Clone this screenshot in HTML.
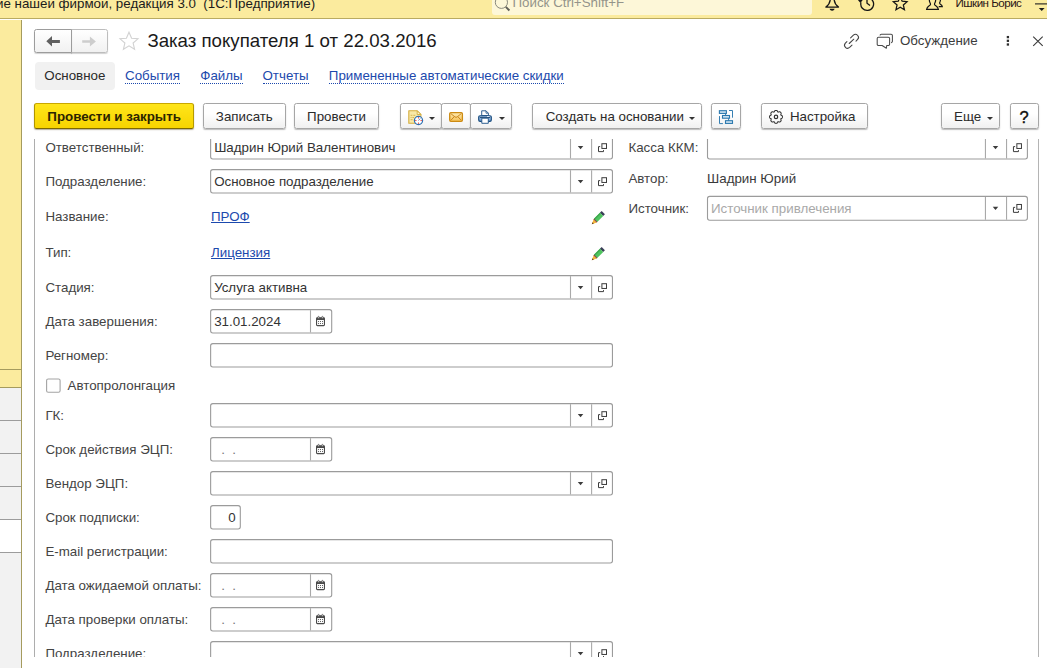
<!DOCTYPE html>
<html lang="ru">
<head>
<meta charset="utf-8">
<title>Заказ покупателя 1 от 22.03.2016</title>
<style>
*{box-sizing:border-box;margin:0;padding:0}
html,body{width:1047px;height:668px;overflow:hidden;background:#fff}
body{position:relative;font-family:"Liberation Sans",Arial,sans-serif;font-size:13.33px;color:#333;line-height:1}
.abs{position:absolute}
/* top bar */
#topbar{left:0;top:0;width:1047px;height:18.5px;background:#fbeb9e;border-bottom:1.5px solid #b9ab62;overflow:hidden}
#apptitle{right:731.9px;top:-5.2px;white-space:pre;font-size:13.33px;color:#1c1c1c;line-height:18px}
#search{left:492px;top:-4px;width:320px;height:18.7px;background:#fdf7d8;border-radius:3px}
#searchtxt{left:512.5px;top:-6.5px;font-size:13.33px;line-height:18px;color:#94948a;white-space:pre}
#user{left:955.5px;top:-5px;font-size:11.6px;letter-spacing:-0.52px;line-height:16px;color:#2a1515;white-space:pre}
/* left panel */
#leftpanel{left:0;top:20px;width:22px;height:648px;background:#f2f2f2;border-right:1.3px solid #a59b5e}
#leftpanel .y{left:0;top:0;width:21px;height:367px;background:#fbeb9e}
#leftpanel .ln{left:0;width:21px;height:1.4px;background:#9c9c9c}
/* header */
.navbtn{top:29px;height:24px;border:1px solid #a9a9a9;background:linear-gradient(#fff,#f1f1f1);box-shadow:0 1px 1px rgba(0,0,0,.18)}
#title{left:147.4px;top:30.3px;font-size:18.67px;line-height:22px;color:#1a1a1a;white-space:pre}
#tabsel{left:34.5px;top:62.3px;width:80.5px;height:27.3px;background:#f1f1f1;border-radius:4px}
.tab{top:67.9px;line-height:16px;height:16.1px;white-space:pre;font-size:13.33px}
a.tab{color:#1c49ad;border-bottom:1px dotted #1c49ad;text-decoration:none}
#obs{left:900px;top:32.7px;line-height:16px;white-space:pre;color:#3c3c3c}
/* toolbar */
.btn{top:103px;height:26px;padding-top:1.300px;border:1px solid #a6a6a6;border-radius:2.500px;background:linear-gradient(#ffffff 40%,#f0f0f0);box-shadow:0 1px 1.200px rgba(0,0,0,.27);line-height:23px;text-align:center;white-space:pre;color:#2b2b2b;font-size:13.33px}
#bmain{left:34px;width:160.3px;background:linear-gradient(#ffe51a,#f7d400);border-color:#c9a700 #b59a00 #7d6800 #b09500;box-shadow:0 1px 1.200px rgba(60,45,0,.4);font-weight:bold;color:#2b2400}
.caret{display:inline-block;width:0;height:0;border-left:3px solid transparent;border-right:3px solid transparent;border-top:3.2px solid #333;vertical-align:middle}
/* form */
#formclip{left:24px;top:139px;width:1023px;height:518px;overflow:hidden}
#form{left:0;top:-139px;width:1023px;height:700px}
#vl{left:10px;top:139px;width:1px;height:530px;background:#adadad}
#vr{left:1014px;top:139px;width:1px;height:530px;background:#b4b4b4}
.lbl{left:21.4px;line-height:16px;white-space:pre;color:#444;font-size:13.33px}
.ft{line-height:16px;white-space:pre;color:#333;font-size:13.33px}
.ft.ph{color:#a9a9a9}
.ft.dots{color:#777;margin-left:-.3px}
.lnk{color:#1c49ad;text-decoration:underline;line-height:16px;white-space:pre;font-size:13.33px}
.txt{line-height:16px;white-space:pre;color:#3a3a3a}

</style>
</head>
<body>
<!-- TOP BAR -->
<div id="topbar" class="abs">
  <div id="search" class="abs"></div>
  <div id="apptitle" class="abs">Управление нашей фирмой, редакция 3.0  (1С:Предприятие)</div>
  <svg class="abs" style="left:492px;top:-6px" width="22" height="22" viewBox="0 0 22 22"><circle cx="9.4" cy="8.3" r="6.1" fill="none" stroke="#7d7d72" stroke-width="0.9"/><path d="M13.8 12.9l3.6 3.6" stroke="#5f5f57" stroke-width="1.9"/></svg>
  <div id="searchtxt" class="abs">Поиск Ctrl+Shift+F</div>
  <!-- bell -->
  <svg class="abs" style="left:822px;top:-8px" width="20" height="20" viewBox="0 0 20 20"><path d="M8.300 7c-.2 3.800-1.400 6-4.400 8.100h12.600c-3-2.100-4.200-4.300-4.400-8.100" fill="none" stroke="#151515" stroke-width="1.300" stroke-linejoin="round"/><path d="M7.600 16.700h5l-.6 1.400q-1.900 1.400-3.800 0z" fill="#151515"/></svg>
  <!-- history -->
  <svg class="abs" style="left:856px;top:-8px" width="22" height="20" viewBox="0 0 22 20"><path d="M5 9.200a6.400 6.400 0 1 0 1.400-2.600" fill="none" stroke="#151515" stroke-width="1.300" transform="translate(0,1.2)"/><path d="M1.600 7.600h5.400l-2.600 3.400z" fill="#151515"/><path d="M11 5v6.300l3 2.300" fill="none" stroke="#151515" stroke-width="1.300"/></svg>
  <!-- star -->
  <svg class="abs" style="left:890px;top:-8px" width="20" height="20" viewBox="0 0 20 20"><path d="M10.20 4.70L12.14 9.23L17.05 9.68L13.34 12.92L14.43 17.72L10.20 15.20L5.97 17.72L7.06 12.92L3.35 9.68L8.26 9.23Z" fill="none" stroke="#151515" stroke-width="1.250" stroke-linejoin="miter"/></svg>
  <!-- people -->
  <svg class="abs" style="left:924px;top:-8px" width="22" height="20" viewBox="0 0 22 20"><path d="M2.600 17.300c.3-2.300 1.800-3 3.500-4.200.8-.6.300-1.700-.2-2.600-1.400-2.600.3-5 2.600-5s4 2.400 2.600 5c-.5.900-1 2-.2 2.600 1.700 1.200 3.200 1.900 3.500 4.200z" fill="none" stroke="#151515" stroke-width="1.200"/><path d="M12.600 6.300c2.300-1.600 4.700.6 3.500 3.300-.5 1-.8 1.800 0 2.400 1 .7 2 1.200 2.200 2.700h-3.600" fill="none" stroke="#151515" stroke-width="1.200"/></svg>
  <div id="user" class="abs">Ишкин Борис</div>
  <svg class="abs" style="left:1033px;top:0" width="14" height="14" viewBox="0 0 14 14"><path d="M2 3.900h12" stroke="#1d1d1d" stroke-width="1.100"/><path d="M5.800 8.100h5.800l-2.900 2.800z" fill="#1d1d1d"/></svg>
</div>

<!-- LEFT PANEL -->
<div id="leftpanel" class="abs">
  <div class="y abs"></div>
  <div class="ln abs" style="top:348.6px;background:#a59b5e"></div>
  <div class="ln abs" style="top:366.6px;background:#a59b5e"></div>
  <div class="ln abs" style="top:399.6px"></div>
  <div class="ln abs" style="top:432.6px"></div>
  <div class="ln abs" style="top:465.8px"></div>
  <div class="abs" style="left:0;top:500px;width:21px;height:32px;background:#fff"></div>
  <div class="ln abs" style="top:499px"></div>
  <div class="ln abs" style="top:531.5px"></div>
</div>

<!-- HEADER -->
<div class="navbtn abs" style="left:34px;width:38px;border-radius:2.500px 0 0 2.500px;border-color:#9c9c9c;z-index:1"></div>
<div class="navbtn abs" style="left:71px;width:37px;border-radius:0 2.500px 2.500px 0;border-color:#bdbdbd"></div>
<svg class="abs" style="left:44px;top:34px;z-index:2" width="20" height="14" viewBox="0 0 20 14"><path d="M2.300 7.200L8 1.900V5.900H15.900V8.900H8V12.500Z" fill="#606060"/></svg>
<svg class="abs" style="left:80px;top:34px" width="20" height="14" viewBox="0 0 20 14"><path d="M15.900 7.500L9.900 2.600V6.300H2.200V8.700H9.900V12.500Z" fill="#cdcdcd"/></svg>
<svg class="abs" style="left:118px;top:30.200px" width="22" height="22" viewBox="0 0 22 22"><path d="M11 2.200l2.600 6 6.400.6-4.900 4.200 1.500 6.300-5.600-3.400-5.600 3.400 1.500-6.300-4.900-4.200 6.400-.6z" fill="none" stroke="#d2d2d2" stroke-width="1.1"/></svg>
<div id="title" class="abs">Заказ покупателя 1 от 22.03.2016</div>

<svg class="abs" style="left:842px;top:32px" width="20" height="19" viewBox="0 0 20 19"><g fill="none" stroke="#444" stroke-width="1.050" stroke-linecap="round"><path d="M8.600 5.900L11.380 3.180A3 3 0 0 1 15.620 7.420L14 9.100"/><path d="M4.900 9.600L3.380 11.180A3 3 0 0 0 7.620 15.420L10 13.100"/><path d="M7.200 11.500L11.800 7.200"/></g></svg>
<svg class="abs" style="left:875px;top:32px" width="20" height="19" viewBox="0 0 20 19"><g fill="none" stroke="#4a4a4a" stroke-width="1.050" stroke-linejoin="round"><path d="M5.100 3.500a1.300 1.300 0 0 1 1.300-1.300h9.700a1.300 1.300 0 0 1 1.300 1.300v5.800a1.300 1.300 0 0 1-1.300 1.300"/><path d="M3.500 5.200h9.800a1.300 1.300 0 0 1 1.300 1.300v5.700a1.300 1.300 0 0 1-1.300 1.300h-1.600l-.3 2.800-4.300-2.800h-3.600a1.300 1.300 0 0 1-1.300-1.300v-5.700a1.300 1.300 0 0 1 1.300-1.300z" fill="#fff"/></g></svg>
<div id="obs" class="abs">Обсуждение</div>
<svg class="abs" style="left:1004px;top:34px" width="8" height="14" viewBox="0 0 8 14"><g fill="#2e2e2e"><rect x="2.750" y="1.950" width="2.300" height="2.300"/><rect x="2.750" y="5.650" width="2.300" height="2.300"/><rect x="2.750" y="9.350" width="2.300" height="2.300"/></g></svg>
<svg class="abs" style="left:1030px;top:34px" width="16" height="14" viewBox="0 0 16 14"><path d="M3.200 2.600l9.500 9.300M12.700 2.600l-9.500 9.300" stroke="#3a3a3a" stroke-width="1.100" fill="none"/></svg>

<!-- TABS -->
<div id="tabsel" class="abs"></div>
<div class="tab abs" style="left:44.300px;color:#2a2a2a">Основное</div>
<a class="tab abs" style="left:125px">События</a>
<a class="tab abs" style="left:200.300px">Файлы</a>
<a class="tab abs" style="left:262.500px">Отчеты</a>
<a class="tab abs" style="left:328.800px">Примененные автоматические скидки</a>

<!-- TOOLBAR -->
<div id="bmain" class="btn abs">Провести и закрыть</div>
<div class="btn abs" style="left:203px;width:82.700px">Записать</div>
<div class="btn abs" style="left:294.300px;width:84.500px">Провести</div>
<div class="btn abs" style="left:400px;width:42px"></div>
<div class="btn abs" style="left:441px;width:30px"></div>
<div class="btn abs" style="left:470px;width:42px"></div>
<!-- doc+clock icon -->
<svg class="abs" style="left:406px;top:108px" width="18" height="18" viewBox="0 0 18 18"><path d="M2.800 2.800H11.200L14.900 6.500V15.300H2.800Z" fill="#f8e9a8" stroke="#d3ad3f" stroke-width="1.100" stroke-linejoin="round"/><path d="M11.200 2.800V6.500H14.900Z" fill="#fdf6d2" stroke="#d3ad3f" stroke-width=".9" stroke-linejoin="round"/><path d="M4.600 7.300h1.800M7.300 7.300h2M4.600 9.500h1M6.400 9.500h1.600M4.600 11.700h2" stroke="#d6b653" stroke-width="1"/><circle cx="12.500" cy="12.500" r="4.100" fill="#fff" stroke="#2f70b3" stroke-width="1.250"/><g fill="#e8261c"><rect x="12" y="9.300" width="1" height="1.100"/><rect x="12" y="14.600" width="1" height="1.100"/><rect x="9.300" y="12" width="1.100" height="1"/><rect x="14.600" y="12" width="1.100" height="1"/></g><path d="M12.500 12.500l1.700-2" stroke="#5b86c9" stroke-width="1"/></svg>
<span class="caret abs" style="left:429px;top:116.500px"></span>
<!-- mail -->
<svg class="abs" style="left:447px;top:109px" width="18" height="15" viewBox="0 0 18 15"><defs><linearGradient id="mg" x1="0" y1="0" x2="0" y2="1"><stop offset="0" stop-color="#fdeab2"/><stop offset="1" stop-color="#f6c155"/></linearGradient></defs><rect x="2.700" y="3.600" width="12.700" height="8.700" rx="1.200" fill="url(#mg)" stroke="#cc8a12" stroke-width="1.300"/><path d="M3.700 4.500l4.200 3.400q1.150.9 2.300 0l4.200-3.400M3.900 11.300l3.300-3.600M14.200 11.300l-3.300-3.600" fill="none" stroke="#c47d10" stroke-width=".9"/></svg>
<!-- printer -->
<svg class="abs" style="left:476px;top:108px" width="18" height="18" viewBox="0 0 18 18"><defs><linearGradient id="pg" x1="0" y1="0" x2="0" y2="1"><stop offset="0" stop-color="#a9c8ea"/><stop offset="1" stop-color="#6f9ed4"/></linearGradient></defs><path d="M5.700 7.500V2.800H10L12.400 5.200V7.500Z" fill="#fff" stroke="#27588c" stroke-width=".95" stroke-linejoin="round"/><path d="M10 2.800V5.200H12.400" fill="none" stroke="#27588c" stroke-width=".8"/><rect x="2.700" y="7.700" width="12.600" height="5.600" rx="1.400" fill="url(#pg)" stroke="#174a7c" stroke-width="1.150"/><path d="M3.900 9.400H14.100" stroke="#173f68" stroke-width=".95"/><rect x="11" y="8.200" width="2.400" height=".8" fill="#f4f8fd"/><path d="M5.800 10.200H12.300V15.300H5.800Z" fill="#fff" stroke="#27588c" stroke-width=".95"/></svg>
<span class="caret abs" style="left:499px;top:116.500px"></span>

<div class="btn abs" style="left:532px;width:170px;text-align:left;padding-left:12.700px">Создать на основании <span class="caret" style="margin-left:1px;margin-top:1px"></span></div>
<div class="btn abs" style="left:711.400px;width:29.300px"></div>
<svg class="abs" style="left:716px;top:108px" width="20" height="18" viewBox="0 0 20 18"><g fill="#d3e6f3" stroke="#2b78ae" stroke-width="1.100"><rect x="3.400" y="2.700" width="7" height="2.700"/><rect x="6.500" y="7.500" width="7" height="2.700"/><rect x="9.500" y="12.700" width="7" height="2.700"/></g><g fill="none" stroke="#2b78ae" stroke-width=".95"><path d="M9.600 5.400v2.100M12.600 10.200v2.500"/><path d="M13 2.500h3.500v7.200"/><path d="M3.500 8.100v7.500h3.400"/></g></svg>
<div class="btn abs" style="left:761px;width:106.600px;text-align:left;padding-left:27.900px">Настройка</div>
<svg class="abs" style="left:768px;top:108px" width="17" height="18" viewBox="0 0 17 18"><g fill="none" stroke="#333" stroke-width="1.050" stroke-linejoin="round"><path d="M8.00 2.45 8.17 2.45 8.34 2.46 8.51 2.48 8.67 2.51 8.83 2.56 8.99 2.65 9.14 2.77 9.27 2.92 9.39 3.11 9.50 3.31 9.59 3.52 9.68 3.72 9.77 3.89 9.87 4.02 9.99 4.10 10.13 4.12 10.29 4.10 10.47 4.05 10.68 3.97 10.89 3.89 11.11 3.82 11.33 3.77 11.53 3.76 11.72 3.78 11.89 3.83 12.04 3.91 12.18 4.00 12.32 4.11 12.44 4.22 12.56 4.34 12.68 4.46 12.79 4.58 12.90 4.72 12.99 4.86 13.07 5.01 13.12 5.18 13.14 5.37 13.13 5.57 13.08 5.79 13.01 6.01 12.93 6.22 12.85 6.43 12.80 6.61 12.78 6.77 12.80 6.91 12.88 7.03 13.01 7.13 13.18 7.22 13.38 7.31 13.59 7.40 13.79 7.51 13.98 7.63 14.13 7.76 14.25 7.91 14.34 8.07 14.39 8.23 14.42 8.39 14.44 8.56 14.45 8.73 14.45 8.90 14.45 9.07 14.44 9.24 14.42 9.41 14.39 9.57 14.34 9.73 14.25 9.89 14.13 10.04 13.98 10.17 13.79 10.29 13.59 10.40 13.38 10.49 13.18 10.58 13.01 10.67 12.88 10.77 12.80 10.89 12.78 11.03 12.80 11.19 12.85 11.37 12.93 11.58 13.01 11.79 13.08 12.01 13.13 12.23 13.14 12.43 13.12 12.62 13.07 12.79 12.99 12.94 12.90 13.08 12.79 13.22 12.68 13.34 12.56 13.46 12.44 13.58 12.32 13.69 12.18 13.80 12.04 13.89 11.89 13.97 11.72 14.02 11.53 14.04 11.33 14.03 11.11 13.98 10.89 13.91 10.68 13.83 10.47 13.75 10.29 13.70 10.13 13.68 9.99 13.70 9.87 13.78 9.77 13.91 9.68 14.08 9.59 14.28 9.50 14.49 9.39 14.69 9.27 14.88 9.14 15.03 8.99 15.15 8.83 15.24 8.67 15.29 8.51 15.32 8.34 15.34 8.17 15.35 8.00 15.35 7.83 15.35 7.66 15.34 7.49 15.32 7.33 15.29 7.17 15.24 7.01 15.15 6.86 15.03 6.73 14.88 6.61 14.69 6.50 14.49 6.41 14.28 6.32 14.08 6.23 13.91 6.13 13.78 6.01 13.70 5.87 13.68 5.71 13.70 5.53 13.75 5.32 13.83 5.11 13.91 4.89 13.98 4.67 14.03 4.47 14.04 4.28 14.02 4.11 13.97 3.96 13.89 3.82 13.80 3.68 13.69 3.56 13.58 3.44 13.46 3.32 13.34 3.21 13.22 3.10 13.08 3.01 12.94 2.93 12.79 2.88 12.62 2.86 12.43 2.87 12.23 2.92 12.01 2.99 11.79 3.07 11.58 3.15 11.37 3.20 11.19 3.22 11.03 3.20 10.89 3.12 10.77 2.99 10.67 2.82 10.58 2.62 10.49 2.41 10.40 2.21 10.29 2.02 10.17 1.87 10.04 1.75 9.89 1.66 9.73 1.61 9.57 1.58 9.41 1.56 9.24 1.55 9.07 1.55 8.90 1.55 8.73 1.56 8.56 1.58 8.39 1.61 8.23 1.66 8.07 1.75 7.91 1.87 7.76 2.02 7.63 2.21 7.51 2.41 7.40 2.62 7.31 2.82 7.22 2.99 7.13 3.12 7.03 3.20 6.91 3.22 6.77 3.20 6.61 3.15 6.43 3.07 6.22 2.99 6.01 2.92 5.79 2.87 5.57 2.86 5.37 2.88 5.18 2.93 5.01 3.01 4.86 3.10 4.72 3.21 4.58 3.32 4.46 3.44 4.34 3.56 4.22 3.68 4.11 3.82 4.00 3.96 3.91 4.11 3.83 4.28 3.78 4.47 3.76 4.67 3.77 4.89 3.82 5.11 3.89 5.32 3.97 5.53 4.05 5.71 4.10 5.87 4.12 6.01 4.10 6.13 4.02 6.23 3.89 6.32 3.72 6.41 3.52 6.50 3.31 6.61 3.11 6.73 2.92 6.86 2.77 7.01 2.65 7.17 2.56 7.33 2.51 7.49 2.48 7.66 2.46 7.83 2.45z"/><circle cx="8" cy="8.900" r="1.700" stroke-width="1.200"/></g></svg>
<div class="btn abs" style="left:941.400px;width:58.400px;text-align:left;padding-left:11.700px">Еще <span class="caret" style="margin-left:2px;margin-top:1px"></span></div>
<div class="btn abs" style="left:1009.500px;width:29.300px;font-size:16.500px;color:#111;-webkit-text-stroke:.4px #111;padding-top:2.300px">?</div>

<!-- FORM -->
<div id="formclip" class="abs"><div id="form" class="abs">
<div id="vl" class="abs"></div>
<div id="vr" class="abs"></div>
<svg class="abs" style="left:0;top:0" width="1023" height="700" viewBox="24 0 1023 700">
<rect x="210.63" y="135.66" width="401.82" height="23.33" rx="2.200" fill="#fff" stroke="#9b9b9b" stroke-width="1.100"/>
<path d="M570.50 136.16V158.49" stroke="#a9a9a9" stroke-width="1.100"/>
<path d="M591.60 136.16V158.49" stroke="#a9a9a9" stroke-width="1.100"/>
<path d="M577.80 146.11H583.30L580.55 149.21Z" fill="#3c3c3c"/>
<g fill="none" stroke="#3c3c3c" stroke-width="1"><rect x="601.90" y="143.71" width="4.600" height="4.750"/><path d="M600.20 146.61H598.50V151.61H603.50V150.11"/></g>
<rect x="210.63" y="169.66" width="401.82" height="23.33" rx="2.200" fill="#fff" stroke="#9b9b9b" stroke-width="1.100"/>
<path d="M570.50 170.16V192.49" stroke="#a9a9a9" stroke-width="1.100"/>
<path d="M591.60 170.16V192.49" stroke="#a9a9a9" stroke-width="1.100"/>
<path d="M577.80 180.11H583.30L580.55 183.21Z" fill="#3c3c3c"/>
<g fill="none" stroke="#3c3c3c" stroke-width="1"><rect x="601.90" y="177.71" width="4.600" height="4.750"/><path d="M600.20 180.61H598.50V185.61H603.50V184.11"/></g>
<rect x="210.63" y="275.66" width="401.82" height="23.33" rx="2.200" fill="#fff" stroke="#9b9b9b" stroke-width="1.100"/>
<path d="M570.50 276.16V298.49" stroke="#a9a9a9" stroke-width="1.100"/>
<path d="M591.60 276.16V298.49" stroke="#a9a9a9" stroke-width="1.100"/>
<path d="M577.80 286.11H583.30L580.55 289.21Z" fill="#3c3c3c"/>
<g fill="none" stroke="#3c3c3c" stroke-width="1"><rect x="601.90" y="283.71" width="4.600" height="4.750"/><path d="M600.20 286.61H598.50V291.61H603.50V290.11"/></g>
<rect x="210.63" y="309.66" width="121.07" height="23.33" rx="2.200" fill="#fff" stroke="#9b9b9b" stroke-width="1.100"/>
<path d="M310.50 310.16V332.49" stroke="#a9a9a9" stroke-width="1.100"/>
<g transform="translate(316.00 316.11)"><rect x=".55" y="1.700" width="7.900" height="7.800" rx=".9" fill="#fff" stroke="#4a4a4a" stroke-width="1.100"/><rect x=".55" y="1.700" width="7.900" height="2.200" fill="#4a4a4a"/><rect x="1.900" y=".3" width="1.300" height="2.100" rx=".6" fill="#fff" stroke="#4a4a4a" stroke-width=".7"/><rect x="5.800" y=".3" width="1.300" height="2.100" rx=".6" fill="#fff" stroke="#4a4a4a" stroke-width=".7"/><g fill="#4a4a4a"><rect x="2.1" y="5.0" width=".95" height=".95"/><rect x="4.05" y="5.0" width=".95" height=".95"/><rect x="6.0" y="5.0" width=".95" height=".95"/><rect x="2.1" y="7.0" width=".95" height=".95"/><rect x="4.05" y="7.0" width=".95" height=".95"/><rect x="6.0" y="7.0" width=".95" height=".95"/></g></g>
<rect x="210.63" y="343.66" width="401.82" height="23.33" rx="2.200" fill="#fff" stroke="#9b9b9b" stroke-width="1.100"/>
<rect x="46.600" y="378.950" width="13.500" height="13.300" rx="1.600" fill="#fff" stroke="#a4a4a4" stroke-width="1.100"/>
<rect x="210.63" y="403.66" width="401.82" height="23.33" rx="2.200" fill="#fff" stroke="#9b9b9b" stroke-width="1.100"/>
<path d="M570.50 404.16V426.49" stroke="#a9a9a9" stroke-width="1.100"/>
<path d="M591.60 404.16V426.49" stroke="#a9a9a9" stroke-width="1.100"/>
<path d="M577.80 414.11H583.30L580.55 417.21Z" fill="#3c3c3c"/>
<g fill="none" stroke="#3c3c3c" stroke-width="1"><rect x="601.90" y="411.71" width="4.600" height="4.750"/><path d="M600.20 414.61H598.50V419.61H603.50V418.11"/></g>
<rect x="210.63" y="437.66" width="121.07" height="23.33" rx="2.200" fill="#fff" stroke="#9b9b9b" stroke-width="1.100"/>
<path d="M310.50 438.16V460.49" stroke="#a9a9a9" stroke-width="1.100"/>
<g transform="translate(316.00 444.11)"><rect x=".55" y="1.700" width="7.900" height="7.800" rx=".9" fill="#fff" stroke="#4a4a4a" stroke-width="1.100"/><rect x=".55" y="1.700" width="7.900" height="2.200" fill="#4a4a4a"/><rect x="1.900" y=".3" width="1.300" height="2.100" rx=".6" fill="#fff" stroke="#4a4a4a" stroke-width=".7"/><rect x="5.800" y=".3" width="1.300" height="2.100" rx=".6" fill="#fff" stroke="#4a4a4a" stroke-width=".7"/><g fill="#4a4a4a"><rect x="2.1" y="5.0" width=".95" height=".95"/><rect x="4.05" y="5.0" width=".95" height=".95"/><rect x="6.0" y="5.0" width=".95" height=".95"/><rect x="2.1" y="7.0" width=".95" height=".95"/><rect x="4.05" y="7.0" width=".95" height=".95"/><rect x="6.0" y="7.0" width=".95" height=".95"/></g></g>
<rect x="210.63" y="471.66" width="401.82" height="23.33" rx="2.200" fill="#fff" stroke="#9b9b9b" stroke-width="1.100"/>
<path d="M570.50 472.16V494.49" stroke="#a9a9a9" stroke-width="1.100"/>
<path d="M591.60 472.16V494.49" stroke="#a9a9a9" stroke-width="1.100"/>
<path d="M577.80 482.11H583.30L580.55 485.21Z" fill="#3c3c3c"/>
<g fill="none" stroke="#3c3c3c" stroke-width="1"><rect x="601.90" y="479.71" width="4.600" height="4.750"/><path d="M600.20 482.61H598.50V487.61H603.50V486.11"/></g>
<rect x="210.63" y="505.66" width="29.67" height="23.33" rx="2.200" fill="#fff" stroke="#9b9b9b" stroke-width="1.100"/>
<rect x="210.63" y="539.66" width="401.82" height="23.33" rx="2.200" fill="#fff" stroke="#9b9b9b" stroke-width="1.100"/>
<rect x="210.63" y="573.66" width="121.07" height="23.33" rx="2.200" fill="#fff" stroke="#9b9b9b" stroke-width="1.100"/>
<path d="M310.50 574.16V596.49" stroke="#a9a9a9" stroke-width="1.100"/>
<g transform="translate(316.00 580.11)"><rect x=".55" y="1.700" width="7.900" height="7.800" rx=".9" fill="#fff" stroke="#4a4a4a" stroke-width="1.100"/><rect x=".55" y="1.700" width="7.900" height="2.200" fill="#4a4a4a"/><rect x="1.900" y=".3" width="1.300" height="2.100" rx=".6" fill="#fff" stroke="#4a4a4a" stroke-width=".7"/><rect x="5.800" y=".3" width="1.300" height="2.100" rx=".6" fill="#fff" stroke="#4a4a4a" stroke-width=".7"/><g fill="#4a4a4a"><rect x="2.1" y="5.0" width=".95" height=".95"/><rect x="4.05" y="5.0" width=".95" height=".95"/><rect x="6.0" y="5.0" width=".95" height=".95"/><rect x="2.1" y="7.0" width=".95" height=".95"/><rect x="4.05" y="7.0" width=".95" height=".95"/><rect x="6.0" y="7.0" width=".95" height=".95"/></g></g>
<rect x="210.63" y="607.66" width="121.07" height="23.33" rx="2.200" fill="#fff" stroke="#9b9b9b" stroke-width="1.100"/>
<path d="M310.50 608.16V630.49" stroke="#a9a9a9" stroke-width="1.100"/>
<g transform="translate(316.00 614.11)"><rect x=".55" y="1.700" width="7.900" height="7.800" rx=".9" fill="#fff" stroke="#4a4a4a" stroke-width="1.100"/><rect x=".55" y="1.700" width="7.900" height="2.200" fill="#4a4a4a"/><rect x="1.900" y=".3" width="1.300" height="2.100" rx=".6" fill="#fff" stroke="#4a4a4a" stroke-width=".7"/><rect x="5.800" y=".3" width="1.300" height="2.100" rx=".6" fill="#fff" stroke="#4a4a4a" stroke-width=".7"/><g fill="#4a4a4a"><rect x="2.1" y="5.0" width=".95" height=".95"/><rect x="4.05" y="5.0" width=".95" height=".95"/><rect x="6.0" y="5.0" width=".95" height=".95"/><rect x="2.1" y="7.0" width=".95" height=".95"/><rect x="4.05" y="7.0" width=".95" height=".95"/><rect x="6.0" y="7.0" width=".95" height=".95"/></g></g>
<rect x="210.63" y="641.66" width="401.82" height="23.33" rx="2.200" fill="#fff" stroke="#9b9b9b" stroke-width="1.100"/>
<path d="M570.50 642.16V664.49" stroke="#a9a9a9" stroke-width="1.100"/>
<path d="M591.60 642.16V664.49" stroke="#a9a9a9" stroke-width="1.100"/>
<path d="M577.80 652.11H583.30L580.55 655.21Z" fill="#3c3c3c"/>
<g fill="none" stroke="#3c3c3c" stroke-width="1"><rect x="601.90" y="649.71" width="4.600" height="4.750"/><path d="M600.20 652.61H598.50V657.61H603.50V656.11"/></g>
<rect x="707.50" y="135.66" width="319.90" height="23.33" rx="2.200" fill="#fff" stroke="#9b9b9b" stroke-width="1.100"/>
<path d="M985.45 136.16V158.49" stroke="#a9a9a9" stroke-width="1.100"/>
<path d="M1006.55 136.16V158.49" stroke="#a9a9a9" stroke-width="1.100"/>
<path d="M992.75 146.11H998.25L995.50 149.21Z" fill="#3c3c3c"/>
<g fill="none" stroke="#3c3c3c" stroke-width="1"><rect x="1016.85" y="143.71" width="4.600" height="4.750"/><path d="M1015.15 146.61H1013.45V151.61H1018.45V150.11"/></g>
<rect x="707.50" y="196.42" width="319.90" height="23.80" rx="2.200" fill="#fff" stroke="#9b9b9b" stroke-width="1.100"/>
<path d="M985.45 196.92V219.72" stroke="#a9a9a9" stroke-width="1.100"/>
<path d="M1006.55 196.92V219.72" stroke="#a9a9a9" stroke-width="1.100"/>
<path d="M992.75 206.87H998.25L995.50 209.97Z" fill="#3c3c3c"/>
<g fill="none" stroke="#3c3c3c" stroke-width="1"><rect x="1016.85" y="204.47" width="4.600" height="4.750"/><path d="M1015.15 207.37H1013.45V212.37H1018.45V210.87"/></g>
</svg>
<div class="lbl abs" style="left:21.4px;top:140.10px">Ответственный:</div>
<div class="ft abs" style="left:190.13px;top:140.10px;">Шадрин Юрий Валентинович</div>
<div class="lbl abs" style="left:21.4px;top:174.10px">Подразделение:</div>
<div class="ft abs" style="left:190.13px;top:174.10px;">Основное подразделение</div>
<div class="lbl abs" style="left:21.4px;top:209.00px">Название:</div>
<a class="lnk abs" style="left:187px;top:209.00px">ПРОФ</a>
<svg class="abs" style="left:563.600px;top:209.50px" width="18" height="18" viewBox="0 0 18 18"><g transform="rotate(45 9 9)"><rect x="6.700" y=".1" width="4.600" height="2.500" fill="#3b4058"/><rect x="6.700" y="2.500" width="4.600" height="8.500" fill="#4fc45f"/><rect x="6.700" y="2.500" width="1.300" height="8.500" fill="#3fa850"/><path d="M6.700 11.500h4.600l-2.300 4.800z" fill="#f6b63a"/><path d="M8.100 14.400h1.800l-.9 2z" fill="#5a3a1a"/><rect x="6.700" y="10.800" width="4.600" height="1" fill="#7a2a3a"/></g></svg>
<div class="lbl abs" style="left:21.4px;top:245.30px">Тип:</div>
<a class="lnk abs" style="left:187px;top:245.30px">Лицензия</a>
<svg class="abs" style="left:563.600px;top:245.80px" width="18" height="18" viewBox="0 0 18 18"><g transform="rotate(45 9 9)"><rect x="6.700" y=".1" width="4.600" height="2.500" fill="#3b4058"/><rect x="6.700" y="2.500" width="4.600" height="8.500" fill="#4fc45f"/><rect x="6.700" y="2.500" width="1.300" height="8.500" fill="#3fa850"/><path d="M6.700 11.500h4.600l-2.300 4.800z" fill="#f6b63a"/><path d="M8.100 14.400h1.800l-.9 2z" fill="#5a3a1a"/><rect x="6.700" y="10.800" width="4.600" height="1" fill="#7a2a3a"/></g></svg>
<div class="lbl abs" style="left:21.4px;top:280.10px">Стадия:</div>
<div class="ft abs" style="left:190.13px;top:280.10px;">Услуга активна</div>
<div class="lbl abs" style="left:21.4px;top:314.10px">Дата завершения:</div>
<div class="ft abs" style="left:190.13px;top:314.10px;">31.01.2024</div>
<div class="lbl abs" style="left:21.4px;top:348.10px">Регномер:</div>
<div class="lbl abs" style="left:43.5px;top:378.30px">Автопролонгация</div>
<div class="lbl abs" style="left:21.4px;top:408.10px">ГК:</div>
<div class="lbl abs" style="left:21.4px;top:442.10px">Срок действия ЭЦП:</div>
<div class="ft dots abs" style="left:190.13px;top:442.10px;">  .  .</div>
<div class="lbl abs" style="left:21.4px;top:476.10px">Вендор ЭЦП:</div>
<div class="lbl abs" style="left:21.4px;top:510.10px">Срок подписки:</div>
<div class="ft abs" style="left:186.85px;width:24.85px;text-align:right;top:510.10px">0</div>
<div class="lbl abs" style="left:21.4px;top:544.10px">E-mail регистрации:</div>
<div class="lbl abs" style="left:21.4px;top:578.10px">Дата ожидаемой оплаты:</div>
<div class="ft dots abs" style="left:190.13px;top:578.10px;">  .  .</div>
<div class="lbl abs" style="left:21.4px;top:612.10px">Дата проверки оплаты:</div>
<div class="ft dots abs" style="left:190.13px;top:612.10px;">  .  .</div>
<div class="lbl abs" style="left:21.4px;top:646.10px">Подразделение:</div>
<div class="lbl abs" style="left:604.4px;top:140.10px">Касса ККМ:</div>
<div class="lbl abs" style="left:604.4px;top:171.30px">Автор:</div>
<div class="txt abs" style="left:683px;top:171.300px">Шадрин Юрий</div>
<div class="lbl abs" style="left:604.4px;top:200.60px">Источник:</div>
<div class="ft ph abs" style="left:687.00px;top:200.86px;">Источник привлечения</div>
</div></div>
</body>
</html>
